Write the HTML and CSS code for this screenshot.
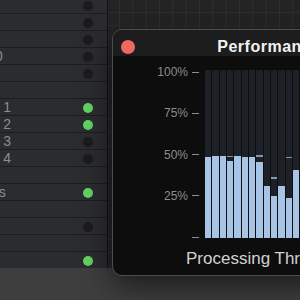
FILE: index.html
```html
<!DOCTYPE html>
<html lang="en">
<head>
    <meta charset="UTF-8">
    <meta name="viewport" content="width=device-width, initial-scale=1.0">
    <title>Pipeline Monitor</title>
    <link rel="stylesheet" href="styles.css">
</head>
<body>
    <div class="app">
        <div class="workspace">
            <aside class="sidebar">
                <ul class="tasks">
                    <li class="task"><span class="task-name"></span><span class="dot"></span></li>
                    <li class="task"><span class="task-name"></span><span class="dot"></span></li>
                    <li class="task"><span class="task-name"></span><span class="dot"></span></li>
                    <li class="task"><span class="task-name">Stage 0</span><span class="dot"></span></li>
                    <li class="task"><span class="task-name"></span><span class="dot"></span></li>
                    <li class="task"></li>
                    <li class="task"><span class="task-name">Worker 1</span><span class="dot on"></span></li>
                    <li class="task"><span class="task-name">Worker 2</span><span class="dot on"></span></li>
                    <li class="task"><span class="task-name">Worker 3</span><span class="dot"></span></li>
                    <li class="task"><span class="task-name">Worker 4</span><span class="dot"></span></li>
                    <li class="task"></li>
                    <li class="task"><span class="task-name">Threads</span><span class="dot on"></span></li>
                    <li class="task"></li>
                    <li class="task"><span class="task-name"></span><span class="dot"></span></li>
                    <li class="task"></li>
                    <li class="task"><span class="task-name"></span><span class="dot on"></span></li>
                </ul>
            </aside>
            <main class="canvas"></main>
        </div>
        <footer class="timeline"></footer>

        <section class="window">
            <div class="titlebar">
                <span class="close"></span>
                <h1>Performance Monitor</h1>
                <span></span>
            </div>
            <div class="chart">
                <div class="axis">
                    <div class="tick"><span>100%</span><i></i></div>
                    <div class="tick"><span>75%</span><i></i></div>
                    <div class="tick"><span>50%</span><i></i></div>
                    <div class="tick"><span>25%</span><i></i></div>
                    <div class="tick"><span></span><i></i></div>
                </div>
                <div class="plot">
                    <div class="bar"><div class="fill" style="height: 48.4%"></div></div>
                    <div class="bar"><div class="fill" style="height: 49%"></div></div>
                    <div class="bar"><div class="fill" style="height: 49%"></div></div>
                    <div class="bar"><div class="peak" style="bottom: 48%"></div><div class="fill" style="height: 46%"></div></div>
                    <div class="bar"><div class="fill" style="height: 49%"></div></div>
                    <div class="bar"><div class="fill" style="height: 48.4%"></div></div>
                    <div class="bar"><div class="fill" style="height: 48.4%"></div></div>
                    <div class="bar"><div class="peak" style="bottom: 48.4%"></div><div class="fill" style="height: 45.4%"></div></div>
                    <div class="bar"><div class="fill" style="height: 31%"></div></div>
                    <div class="bar"><div class="peak" style="bottom: 35.3%"></div><div class="fill" style="height: 25.2%"></div></div>
                    <div class="bar"><div class="fill" style="height: 31%"></div></div>
                    <div class="bar"><div class="peak" style="bottom: 47.6%"></div><div class="fill" style="height: 23.8%"></div></div>
                    <div class="bar"><div class="fill" style="height: 40.5%"></div></div>
                    <div class="bar"><div class="fill" style="height: 44%"></div></div>
                    <div class="bar"><div class="fill" style="height: 47%"></div></div>
                    <div class="bar"><div class="fill" style="height: 38%"></div></div>
                    <div class="bar"><div class="fill" style="height: 42%"></div></div>
                    <div class="bar"><div class="fill" style="height: 46%"></div></div>
                    <div class="bar"><div class="fill" style="height: 35%"></div></div>
                </div>
            </div>
            <p class="caption">Processing Throughput</p>
        </section>
    </div>
</body>
</html>
```

FILE: styles.css
```css
* {
    box-sizing: border-box;
}

body {
    margin: 0;
    width: 300px;
    height: 300px;
    overflow: hidden;
    background-color: #242424;
    font-family: "Liberation Sans", Arial, sans-serif;
}

.app {
    position: relative;
    width: 300px;
    height: 300px;
    display: flex;
    flex-direction: column;
}

.workspace {
    display: flex;
    height: 268px;
    overflow: hidden;
}

/* task list on the left */
.sidebar {
    width: 108px;
    flex: none;
    background-color: #2b2c2f;
    border-right: 1px solid #141415;
    overflow: hidden;
}

.tasks {
    list-style: none;
    margin: -3px 0 0;
    padding: 0;
}

.task {
    height: 17px;
    display: flex;
    align-items: center;
    justify-content: space-between;
    padding-right: 14px;
    border-bottom: 1px solid #1d1d1f;
}

.task-name {
    margin-left: -45.5px;
    font-size: 14px;
    color: #8d8d91;
    white-space: nowrap;
}

.dot {
    width: 10px;
    height: 10px;
    margin-top: 2px;
    border-radius: 50%;
    background-color: #1b1b1d;
}

.dot.on {
    background-color: #62d262;
}

/* node canvas */
.canvas {
    flex: 1;
    background-color: #242424;
    background-image:
        linear-gradient(to right, #2f2f2f 1px, transparent 1px),
        linear-gradient(to bottom, #2c2c2c 1px, transparent 1px);
    background-size: 13.33px 13.33px;
    background-position: 11px 12px;
}

.timeline {
    flex: 1;
    background-color: #3e3e3e;
}

/* floating window */
.window {
    position: absolute;
    left: 112px;
    top: 29px;
    width: 381px;
    height: 247px;
    background-color: #0d0d0d;
    border: 1px solid #4d4d4d;
    border-radius: 10px;
    overflow: hidden;
    box-shadow: 0 10px 30px rgba(0, 0, 0, 0.55);
}

.titlebar {
    height: 26px;
    display: grid;
    grid-template-columns: 14px 1fr 14px;
    align-items: center;
    padding: 8px 8px 0;
    background-color: #1d1d1d;
}

.close {
    width: 14px;
    height: 14px;
    border-radius: 50%;
    background-color: #ec6a5e;
}

h1 {
    margin: 0;
    text-align: center;
    font-size: 16px;
    line-height: 18px;
    font-weight: bold;
    letter-spacing: 0.5px;
    color: #f2f2f2;
    white-space: nowrap;
}

.chart {
    display: flex;
    align-items: flex-start;
    margin-top: 9px;
}

.axis {
    width: 86px;
    height: 179px;
    flex: none;
    display: flex;
    flex-direction: column;
    justify-content: space-between;
}

.tick {
    height: 14px;
    display: flex;
    align-items: center;
    justify-content: flex-end;
    gap: 4px;
    font-size: 12px;
    color: #8c8c8c;
}

.tick i {
    width: 7px;
    height: 1px;
    background-color: #8c8c8c;
}

.plot {
    display: flex;
    gap: 1px;
    height: 168px;
    margin: 5px 0 0 6px;
}

.bar {
    position: relative;
    width: 6.34px;
    flex: none;
    display: flex;
    flex-direction: column;
    justify-content: flex-end;
    background-color: #1d2127;
}

.fill {
    background-color: #a7c3e5;
}

.peak {
    position: absolute;
    left: 0;
    right: 0;
    height: 1.5px;
    background-color: #7f97b5;
}

.caption {
    margin: 5px 0 0;
    padding-left: 73px;
    font-size: 17px;
    line-height: 20px;
    color: #d2d2d2;
    white-space: nowrap;
}
```
